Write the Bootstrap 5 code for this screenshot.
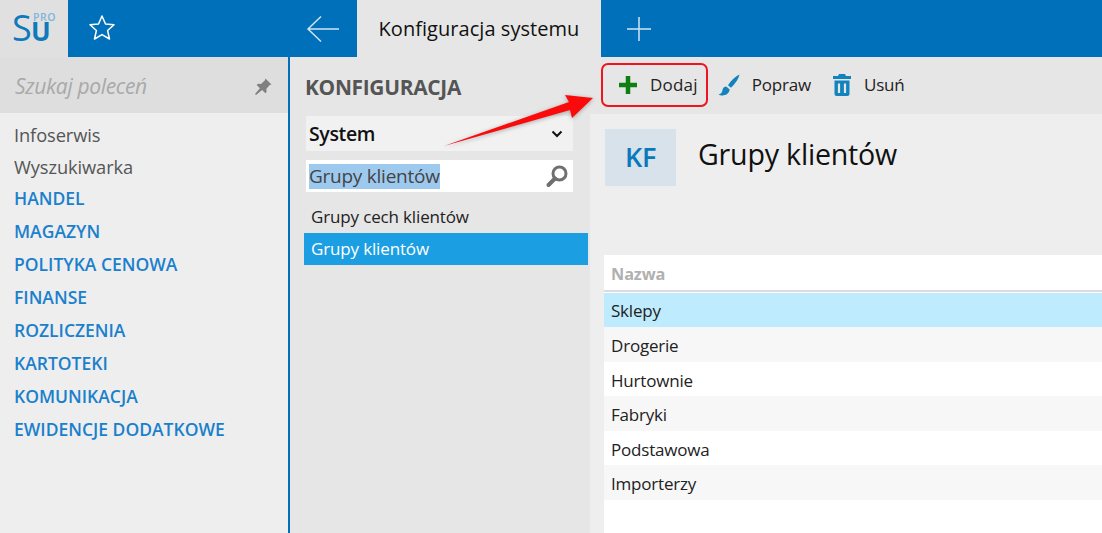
<!DOCTYPE html>
<html lang="pl">
<head>
<meta charset="utf-8">
<link href="https://cdn.jsdelivr.net/npm/bootstrap@5.3.0/dist/css/bootstrap.min.css" rel="stylesheet">
<style>
html,body{height:100%;}
body{font-family:"Open Sans","Noto Sans",sans-serif;width:1102px;height:533px;overflow:hidden;background:#eee;color:#222;font-size:17px;letter-spacing:-.35px;position:relative;}
.topbar{height:57px;background:#0070ba;}
.logo-box{width:68px;background:#e0e0e0;}
.logo-art{display:block;}
.star-box{width:68px;padding-bottom:2px;}
.spacer-a{width:153px;}
.back-box{width:68px;}
.tab-box{width:244px;background:#e6e6e6;color:#111;font-size:20px;font-weight:500;letter-spacing:.05px;}
.plus-box{width:76px;}
.main-area{height:476px;}
.side-col{width:290px;background:#eee;border-right:2px solid #0070ba;}
.side-search{height:56px;background:#dedede;padding:4px 15px 0;font-style:italic;font-size:21px;color:#a9a9a9;}
.side-menu{padding:6px 14px 0;}
.side-item{height:33px;line-height:33px;white-space:nowrap;}
.side-plain{color:#555;font-size:18.300px;letter-spacing:-.1px;height:31.500px;line-height:31.500px;}
.side-head{color:#1a80cc;font-weight:600;font-size:17.500px;letter-spacing:0;}
.mid-col{width:300px;background:#e6e6e6;padding:0 2px 0 14px;}
.mid-title{height:59px;line-height:61px;color:#555;font-size:20.900px;font-weight:700;padding-left:1px;letter-spacing:-.3px;}
.sel-box{width:267px;height:35px;margin-left:2px;background:#f1f1f1;padding:0 10px 0 3px;font-size:19.500px;font-weight:600;color:#111;}
.find-box{width:267px;height:32px;margin:9px 0 0 2px;background:#fff;padding:0 4px 0 3px;font-size:19px;color:#444;}
.sel-text{background:#9ec9ef;line-height:25px;letter-spacing:-.25px;}
.mid-row{height:32px;line-height:32px;padding-left:7px;font-size:17px;color:#222;letter-spacing:-.15px;}
.mid-first{margin-top:9px;}
.mid-on{background:#1b9fe2;color:#fff;}
.right-col{min-width:0;}
.toolbar{height:57px;background:#e6e6e6;padding:0 0 2px 28px;color:#222;}
.tool-item{font-size:17px;letter-spacing:-.2px;}
.tool-gap-a{margin-left:20px;}
.tool-gap-b{margin-left:22px;}
.tool-lab{margin-left:12px;}
.tool-wide{letter-spacing:.2px;}
.tool-last{margin-left:13px;}
.head-row{padding:15px 0 0 15px;height:141px;}
.kf-tile{width:71px;height:57px;background:#d7e2ea;color:#0a78bd;font-size:27px;font-weight:600;}
.head-title{font-size:28.600px;color:#111;margin:-4px 0 0 22px;line-height:57px;letter-spacing:-.2px;}
.grid-wrap{margin-left:14px;background:#fff;height:278px;}
.grid-head{height:37px;padding:4px 7px 0;border-bottom:2px solid #dcdcdc;color:#b0b0b0;font-weight:700;font-size:16.300px;letter-spacing:-.1px;}
.grid-row{height:34.500px;line-height:37px;padding-left:7px;font-size:17px;letter-spacing:-.2px;}
.grid-row:nth-child(odd){background:#f7f7f7;}
.grid-row.row-on{background:#beebfd;margin-top:1px;height:34px;line-height:36px;}
.overlay-shape{position:absolute;left:0;top:0;pointer-events:none;}
.arrow-shadow{filter:drop-shadow(0 1px 2px rgba(0,0,0,.3));}
</style>
</head>
<body>
<div class="topbar d-flex">
  <div class="logo-box">
    <svg class="logo-art" width="68" height="57" viewBox="0 0 68 57" aria-label="Su PRO">
      <text x="12" y="41" font-family="Open Sans" font-size="36" font-weight="500" fill="#0f79bd">S</text>
      <text x="31" y="41" font-family="Open Sans" font-size="26" font-weight="700" fill="#0f79bd">U</text>
      <text x="33" y="20.500" font-family="Open Sans" font-size="10.500" font-weight="600" letter-spacing=".5" fill="#7eb6dc">PRO</text>
    </svg>
  </div>
  <div class="star-box d-flex align-items-center justify-content-center">
    <svg width="28" height="28" viewBox="0 0 28 28"><path d="M14 2l3.500 8 8.500.8-6.400 5.700 1.900 8.500L14 20.600 6.500 25l1.900-8.500L2 10.800l8.500-.8z" fill="none" stroke="#fff" stroke-width="1.500" stroke-linejoin="round"/></svg>
  </div>
  <div class="spacer-a"></div>
  <div class="back-box d-flex align-items-center justify-content-center">
    <svg width="34" height="28" viewBox="0 0 34 28"><path d="M33 14H2M15 1.500 2 14l13 12.500" fill="none" stroke="#cfe4f3" stroke-width="1.500"/></svg>
  </div>
  <div class="tab-box d-flex align-items-center justify-content-center">Konfiguracja systemu</div>
  <div class="plus-box d-flex align-items-center justify-content-center">
    <svg width="26" height="26" viewBox="0 0 26 26"><path d="M13 1v24M1 13h24" stroke="#cfe4f3" stroke-width="1.500"/></svg>
  </div>
</div>
<div class="main-area d-flex">
  <div class="side-col flex-shrink-0">
    <div class="side-search d-flex align-items-center justify-content-between">
      <span>Szukaj poleceń</span>
      <svg width="20" height="20" viewBox="0 0 20 20"><path d="M12.500 1.500l6 6-1.800.6-3.400 3.800.3 3.200-1.200 1.200-3.300-3.300L3 18l-1-1 4.900-5.700L3.700 8l1.200-1.200 3.200.3L11.900 3.300z" fill="#808080"/></svg>
    </div>
    <div class="side-menu">
      <div class="side-item side-plain">Infoserwis</div>
      <div class="side-item side-plain">Wyszukiwarka</div>
      <div class="side-item side-head">HANDEL</div>
      <div class="side-item side-head">MAGAZYN</div>
      <div class="side-item side-head">POLITYKA CENOWA</div>
      <div class="side-item side-head">FINANSE</div>
      <div class="side-item side-head">ROZLICZENIA</div>
      <div class="side-item side-head">KARTOTEKI</div>
      <div class="side-item side-head">KOMUNIKACJA</div>
      <div class="side-item side-head">EWIDENCJE DODATKOWE</div>
    </div>
  </div>
  <div class="mid-col flex-shrink-0">
    <div class="mid-title">KONFIGURACJA</div>
    <div class="sel-box d-flex align-items-center justify-content-between">
      <span>System</span>
      <svg width="12" height="8" viewBox="0 0 12 8"><path d="M1.500 1.500 6 6l4.500-4.500" fill="none" stroke="#111" stroke-width="2"/></svg>
    </div>
    <div class="find-box d-flex align-items-center justify-content-between">
      <span class="sel-text">Grupy klientów</span>
      <svg width="24" height="24" viewBox="0 0 24 24"><circle cx="14.500" cy="9.500" r="6.500" fill="none" stroke="#707070" stroke-width="3"/><path d="M10 14.500 3.500 21" stroke="#707070" stroke-width="4" stroke-linecap="round"/></svg>
    </div>
    <div class="mid-row mid-first">Grupy cech klientów</div>
    <div class="mid-row mid-on">Grupy klientów</div>
  </div>
  <div class="right-col flex-grow-1">
    <div class="toolbar d-flex align-items-center">
      <div class="tool-item d-flex align-items-center">
        <svg width="20" height="20" viewBox="0 0 20 20"><path d="M10 1v18M1 10h18" stroke="#0e7f10" stroke-width="4.500"/></svg>
        <span class="tool-lab tool-wide">Dodaj</span>
      </div>
      <div class="tool-item tool-gap-a d-flex align-items-center">
        <svg width="22" height="22" viewBox="0 0 22 22"><path d="M21.500.5c-1 4.500-4.500 9.500-8.500 13.200l-3-2.500C13 6.500 17.500 2.500 21.500.5zM8.300 12.500c-3 .2-3.600 2.600-4 4.400-.3 1.600-1.600 3-3.800 3.600 3 1.600 10 2 11.200-4.900z" fill="#1283bd"/></svg>
        <span class="tool-lab">Popraw</span>
      </div>
      <div class="tool-item tool-gap-b d-flex align-items-center">
        <svg width="18" height="22" viewBox="0 0 18 22"><path d="M6 0h6l1 2h5v3H0V2h5zM1.500 6.500h15V20a2 2 0 0 1-2 2h-11a2 2 0 0 1-2-2z" fill="#1283bd"/><path d="M6 9.500v9.500M12 9.500v9.500" stroke="#e6e6e6" stroke-width="2.200"/></svg>
        <span class="tool-last">Usuń</span>
      </div>
    </div>
    <div class="head-row d-flex">
      <div class="kf-tile d-flex align-items-center justify-content-center">KF</div>
      <div class="head-title">Grupy klientów</div>
    </div>
    <div class="grid-wrap">
      <div class="grid-head d-flex align-items-center">Nazwa</div>
      <div class="grid-row row-on">Sklepy</div>
      <div class="grid-row">Drogerie</div>
      <div class="grid-row">Hurtownie</div>
      <div class="grid-row">Fabryki</div>
      <div class="grid-row">Podstawowa</div>
      <div class="grid-row">Importerzy</div>
    </div>
  </div>
</div>
<svg class="overlay-shape" width="1102" height="533" viewBox="0 0 1102 533">
  <rect x="602" y="64" width="105" height="42" rx="6" fill="none" stroke="#f0141e" stroke-width="2"/>
  <path class="arrow-shadow" d="M444 146 569 102 565 95 593 98 572 118 570 110z" fill="#fa0a0a"/>
</svg>
</body>
</html>
